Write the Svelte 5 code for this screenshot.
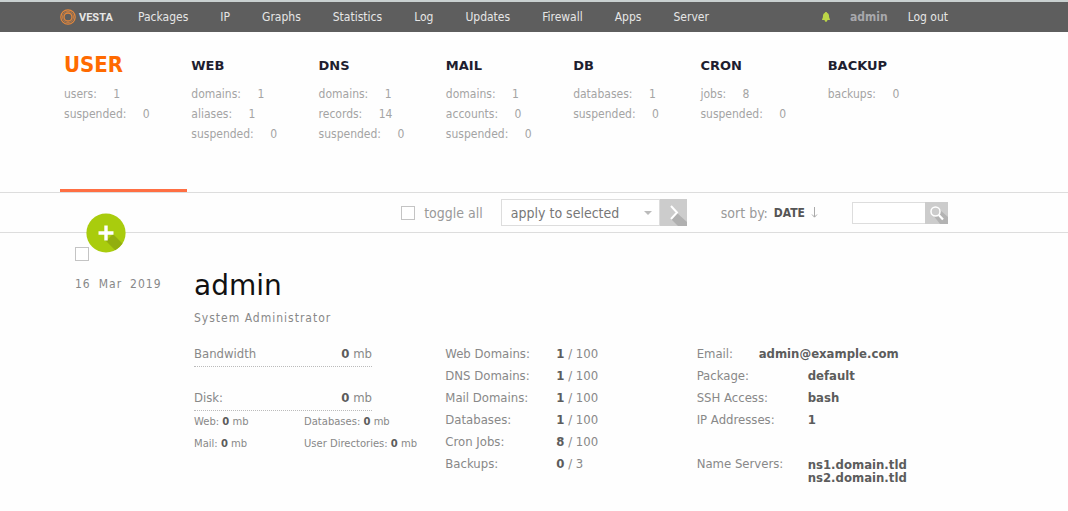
<script lang="ts">
	const menu = ['Packages', 'IP', 'Graphs', 'Statistics', 'Log', 'Updates', 'Firewall', 'Apps', 'Server'];

	const stats = [
		{ title: 'USER', rows: [['users', 1], ['suspended', 0]] },
		{ title: 'WEB', rows: [['domains', 1], ['aliases', 1], ['suspended', 0]] },
		{ title: 'DNS', rows: [['domains', 1], ['records', 14], ['suspended', 0]] },
		{ title: 'MAIL', rows: [['domains', 1], ['accounts', 0], ['suspended', 0]] },
		{ title: 'DB', rows: [['databases', 1], ['suspended', 0]] },
		{ title: 'CRON', rows: [['jobs', 8], ['suspended', 0]] },
		{ title: 'BACKUP', rows: [['backups', 0]] }
	];

	const disk = [
		['Web', 0],
		['Databases', 0],
		['Mail', 0],
		['User Directories', 0]
	];

	const limits = [
		['Web Domains', 1, 100],
		['DNS Domains', 1, 100],
		['Mail Domains', 1, 100],
		['Databases', 1, 100],
		['Cron Jobs', 8, 100],
		['Backups', 0, 3]
	];

	let active = $state('USER');
	let all = $state(false);
	let search = $state('');
</script>

<header class="topbar">
	<a class="logo" href="#home" aria-label="Vesta">
		<svg width="16" height="16" viewBox="0 0 16 16" fill="none" stroke="#e8883a">
			<circle cx="8" cy="8" r="7.2" stroke-width="1.2" />
			<circle cx="8" cy="8" r="5.6" stroke-width="0.7" />
			<circle cx="8" cy="8" r="4" stroke-width="1.3" />
		</svg>
		<span>VESTA</span>
	</a>
	<nav>
		{#each menu as item}
			<a href="#{item}">{item}</a>
		{/each}
	</nav>
	<div class="account">
		<button class="bell" aria-label="Notifications">
			<svg width="8" height="10" viewBox="0 0 8 10" fill="#bcd648">
				<path d="M4 0C5 0 5.2.7 5.2 1 6.8 1.6 7 3 7.1 5 7.2 6.3 8 6.8 8 8H5.4C5.4 9 4.8 9.8 4 9.8S2.6 9 2.6 8H0C0 6.8.8 6.3.9 5 1 3 1.2 1.6 2.8 1 2.8.7 3 0 4 0Z" />
			</svg>
		</button>
		<a class="me" href="#profile">admin</a>
		<a href="#logout">Log out</a>
	</div>
</header>

<div class="stats">
	{#each stats as stat}
		<a class="stat" class:active={stat.title === active} href="#{stat.title}" onclick={() => (active = stat.title)}>
			<h2>{stat.title}</h2>
			{#each stat.rows as [label, value]}
				<p>{label}: <span>{value}</span></p>
			{/each}
		</a>
	{/each}
</div>

<div class="toolbar">
	<button class="add" aria-label="Add user">
		<svg width="40" height="40" viewBox="0 0 40 40">
			<circle cx="20" cy="20" r="19.6" fill="#a9cc0d" />
			<path d="M21.5 26.5 27 21 36.4 30.6A19.6 19.6 0 0 1 29.2 37.2L18.5 26.5Z" fill="#92ae0e" />
			<path d="M20 12.5V27.5M12.5 20H27.5" stroke="#fff" stroke-width="3.4" />
		</svg>
	</button>
	<label class="toggle"><input type="checkbox" bind:checked={all} /> toggle all</label>
	<form class="apply">
		<div class="select">
			<select aria-label="Action">
				<option>apply to selected</option>
				<option>rebuild</option>
				<option>suspend</option>
				<option>delete</option>
			</select>
			<svg width="8" height="4" viewBox="0 0 8 4"><path d="M0 0H8L4 4Z" fill="#bbb" /></svg>
		</div>
		<button type="button" aria-label="Apply">
			<svg width="27" height="27" viewBox="0 0 27 27">
				<path d="M11 20 17 14 27 23V27H18Z" fill="#b0b0b0" />
				<path d="M11 7 17 13.5 11 20" fill="none" stroke="#fff" stroke-width="2" />
			</svg>
		</button>
	</form>
	<div class="sort">
		sort by: <button>DATE</button>
		<svg width="7" height="11" viewBox="0 0 7 11" fill="none" stroke="#aaa"><path d="M3.5 0V10M1 7.5 3.5 10.2 6 7.5" /></svg>
	</div>
	<form class="search">
		<input type="text" aria-label="Search" bind:value={search} />
		<button type="button" aria-label="Search">
			<svg width="23" height="22" viewBox="0 0 23 22">
				<path d="M8 13 15 8 23 15V22H15Z" fill="#b3b3b3" />
				<circle cx="10.5" cy="9.5" r="4.5" fill="#ccc" stroke="#fff" stroke-width="1.5" />
				<path d="M13.8 13 18 17.5" stroke="#fff" stroke-width="2.2" />
			</svg>
		</button>
	</form>
</div>

<main>
	<aside>
		<input type="checkbox" aria-label="Select admin" bind:checked={all} />
		<div class="date"><span>16</span><span>Mar</span><span>2019</span></div>
	</aside>
	<section>
		<h1>admin</h1>
		<p class="name">System Administrator</p>
		<div class="details">
			<div class="usage">
				<div class="meter"><span>Bandwidth</span><span><b>0</b> mb</span></div>
				<div class="meter"><span>Disk:</span><span><b>0</b> mb</span></div>
				<div class="disk">
					{#each disk as [label, value]}
						<span>{label}: <b>{value}</b> mb</span>
					{/each}
				</div>
			</div>
			<dl>
				{#each limits as [label, used, limit]}
					<div><dt>{label}:</dt><dd><b>{used}</b> / {limit}</dd></div>
				{/each}
			</dl>
			<dl>
				<div class="email"><dt>Email:</dt><dd><b>admin@example.com</b></dd></div>
				<div><dt>Package:</dt><dd><b>default</b></dd></div>
				<div><dt>SSH Access:</dt><dd><b>bash</b></dd></div>
				<div><dt>IP Addresses:</dt><dd><b>1</b></dd></div>
				<div class="servers"><dt>Name Servers:</dt><dd><b>ns1.domain.tld</b><b>ns2.domain.tld</b></dd></div>
			</dl>
		</div>
	</section>
</main>

<style>
	:global(body) {
		margin: 0;
		background: #fefefe;
		color: #888;
		font-family: 'DejaVu Sans Condensed', 'DejaVu Sans', sans-serif;
		font-size: 13px;
	}

	a {
		color: inherit;
		text-decoration: none;
	}

	h1,
	h2,
	p,
	dl,
	dd {
		margin: 0;
	}

	button {
		padding: 0;
		border: 0;
		background: none;
		font: inherit;
		color: inherit;
		cursor: pointer;
	}

	svg {
		display: block;
	}

	b {
		color: #5c5c5c;
	}

	input[type='checkbox'] {
		appearance: none;
		box-sizing: border-box;
		width: 14px;
		height: 14px;
		margin: 0;
		border: 1px solid #c4c4c4;
		background: #fff;
	}

	input[type='checkbox']:checked {
		background: #a9cc0d;
	}

	.topbar {
		display: flex;
		align-items: center;
		height: 30px;
		padding: 0 120px 0 60px;
		border-top: 2px solid #c9d0d0;
		background: #5e5e5e;
		color: #e6e6e6;
		font-size: 12px;
	}

	.logo {
		display: flex;
		align-items: center;
		gap: 3px;
		width: 78px;
		font-family: 'Roboto', sans-serif;
		font-size: 11px;
		font-weight: bold;
	}

	nav {
		display: flex;
		gap: 32px;
	}

	.account {
		display: flex;
		align-items: center;
		gap: 20px;
		margin-left: auto;
	}

	.me {
		color: #a8a8ac;
		font-weight: bold;
	}

	.stats {
		display: grid;
		grid-template-columns: repeat(7, 1fr);
		padding: 0 117px 0 60px;
		border-bottom: 1px solid #ddd;
	}

	.stat {
		box-sizing: border-box;
		height: 160px;
		padding: 18px 4px 0;
		border-bottom: 3px solid transparent;
		color: #a4a4a4;
		font-size: 12px;
	}

	.stat h2 {
		height: 34px;
		color: #1e1e30;
		font-family: 'DejaVu Sans', sans-serif;
		font-size: 13px;
		line-height: 32px;
	}

	.stat p {
		line-height: 20px;
	}

	.stat p span {
		margin-left: 13px;
	}

	.stat.active {
		border-color: #ff6f43;
	}

	.stat.active h2 {
		color: #ff6a00;
		font-family: 'DejaVu Sans Condensed', 'DejaVu Sans', sans-serif;
		font-size: 22px;
		line-height: 30px;
	}

	.toolbar {
		position: relative;
		display: flex;
		align-items: center;
		justify-content: flex-end;
		height: 39px;
		padding: 0 120px 0 60px;
		border-bottom: 1px solid #ddd;
		font-size: 14px;
	}

	.add {
		position: absolute;
		left: 86px;
		bottom: -21px;
	}

	.toggle {
		display: flex;
		align-items: center;
		gap: 9px;
		margin-right: 18px;
		color: #999;
	}

	.apply,
	.search {
		display: flex;
	}

	.select {
		position: relative;
	}

	.select svg {
		position: absolute;
		top: 12px;
		right: 8px;
	}

	select {
		appearance: none;
		box-sizing: border-box;
		width: 159px;
		height: 27px;
		padding: 0 9px;
		border: 1px solid #ddd;
		border-radius: 0;
		background: #fff;
		color: #777;
		font: inherit;
	}

	.apply button,
	.search button {
		background: #ccc;
	}

	.sort {
		display: flex;
		align-items: center;
		gap: 6px;
		margin: 0 34px;
		color: #999;
	}

	.sort button {
		color: #555;
		font-size: 12px;
		font-weight: bold;
	}

	.search input {
		box-sizing: border-box;
		width: 73px;
		height: 22px;
		border: 1px solid #ddd;
		border-right: 0;
		background: #fff;
	}

	main {
		display: flex;
		padding: 14px 120px 24px 75px;
	}

	aside {
		width: 119px;
	}

	aside input {
		display: block;
	}

	.date,
	.name {
		font-size: 12px;
		letter-spacing: 1px;
	}

	.date {
		display: flex;
		gap: 8px;
		margin-top: 16px;
	}

	section {
		flex: 1;
	}

	h1 {
		margin-top: 21px;
		color: #111;
		font-family: 'DejaVu Sans', sans-serif;
		font-size: 28px;
		font-weight: normal;
		line-height: 36px;
	}

	.name {
		margin-top: 6px;
		line-height: 16px;
	}

	.details {
		display: grid;
		grid-template-columns: repeat(3, 1fr);
		margin-top: 17px;
		line-height: 22px;
	}

	.meter {
		display: flex;
		justify-content: space-between;
		width: 178px;
		height: 23px;
		border-bottom: 1px dotted #bbb;
	}

	.meter + .meter {
		margin-top: 20px;
	}

	.disk {
		display: grid;
		grid-template-columns: 110px 1fr;
		font-family: 'DejaVu Sans', sans-serif;
		font-size: 10px;
		white-space: nowrap;
	}

	dl div {
		display: grid;
		grid-template-columns: 111px 1fr;
	}

	dl .email {
		grid-template-columns: 62px 1fr;
	}

	dl .servers {
		margin-top: 22px;
	}

	.servers b {
		display: block;
		line-height: 13px;
	}

	.servers b:first-child {
		padding-top: 5px;
	}
</style>
